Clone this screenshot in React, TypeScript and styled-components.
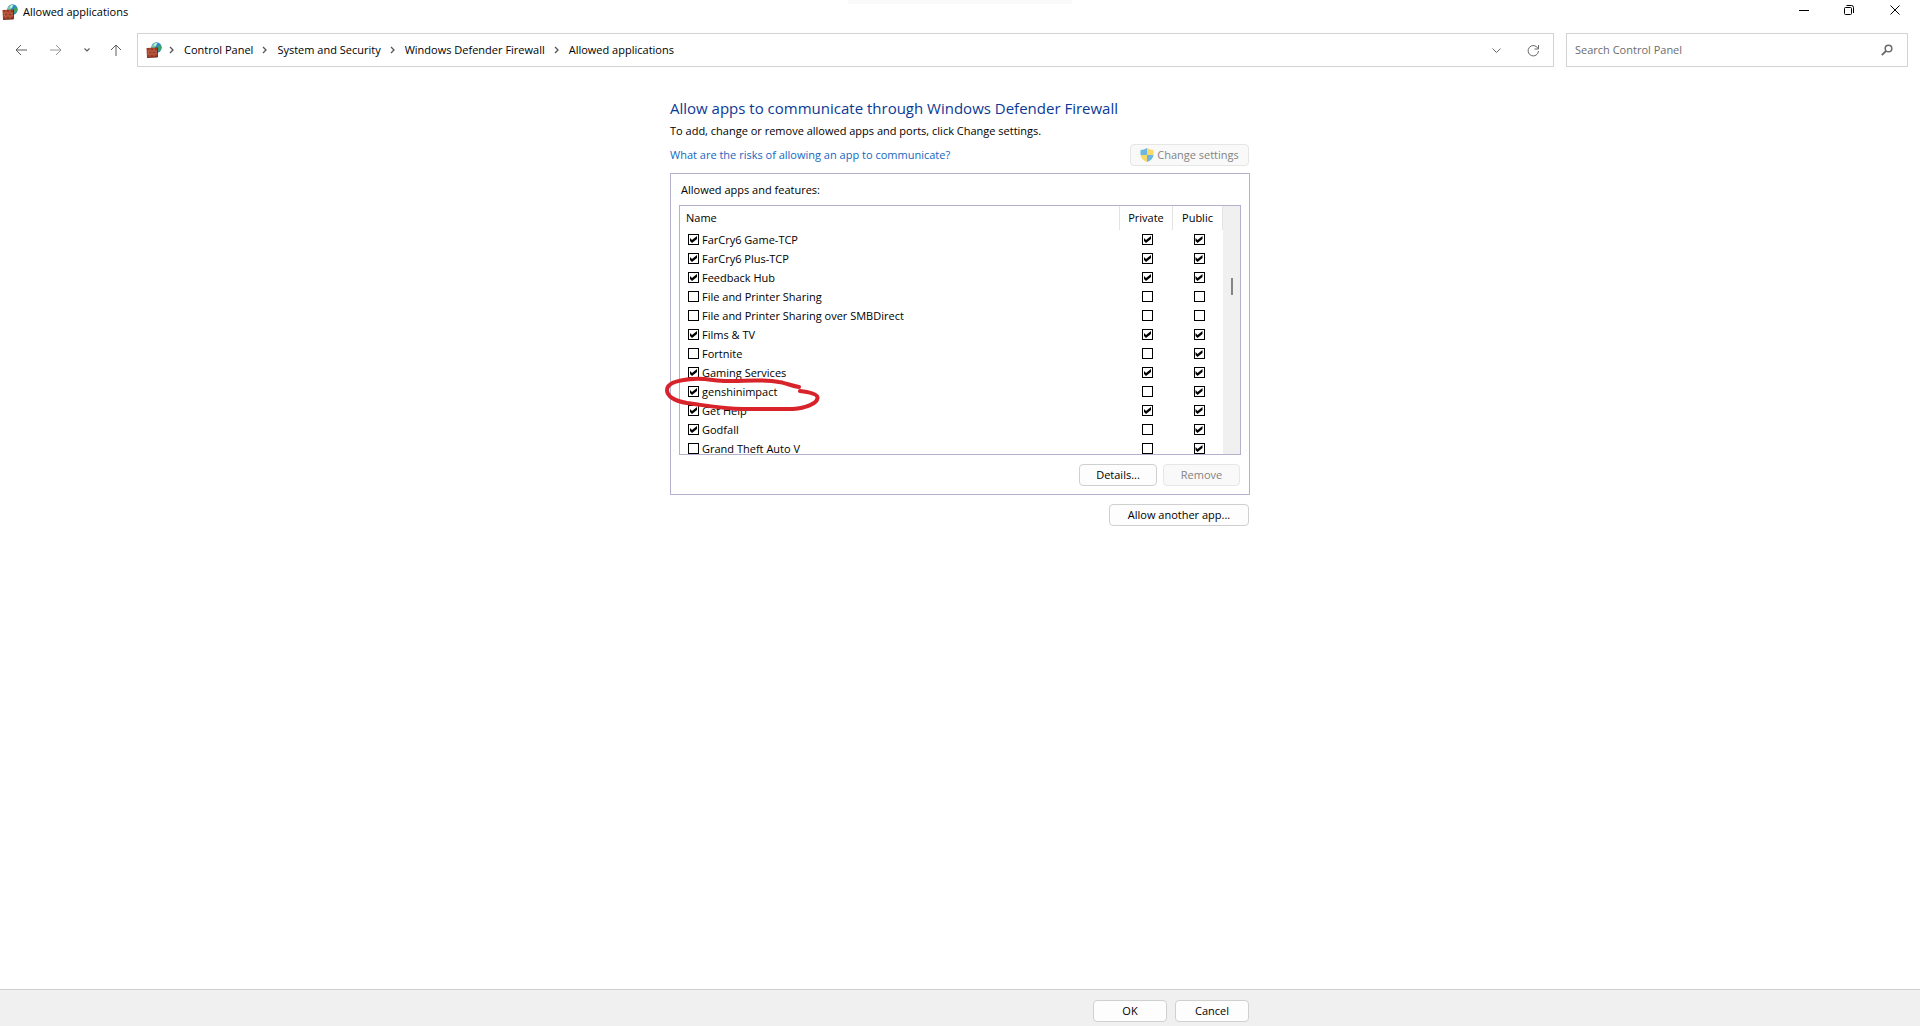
import React, { useId } from "react";
import styled, { createGlobalStyle, css } from "styled-components";

const GlobalStyle = createGlobalStyle`
  *, *::before, *::after { box-sizing: border-box; }
  body {
    margin: 0;
    background: #fff;
    color: #000;
    font-family: "Open Sans", "Noto Sans", sans-serif;
    font-size: 11px;
    line-height: 16px;
  }
  button, input { font: inherit; color: inherit; }
`;

const Window = styled.div`
  position: relative;
  display: flex;
  flex-direction: column;
  min-height: 100vh;
`;

const SnapHandle = styled.div`
  position: absolute;
  top: 0;
  left: 50%;
  width: 224px;
  height: 4px;
  margin-left: -112px;
  background: #fafafa;
`;

const TitleBar = styled.header`
  display: flex;
  align-items: center;
  justify-content: space-between;
  height: 23px;
  padding: 0 1px 0 2px;
`;

const Title = styled.h1`
  display: flex;
  align-items: center;
  gap: 5px;
  margin: 0;
  font-size: 11px;
  font-weight: 400;
`;

const CaptionButtons = styled.div`
  display: flex;
  align-self: flex-start;
`;

const IconButton = styled.button<{ $width: number }>`
  display: flex;
  align-items: center;
  justify-content: center;
  width: ${(p) => p.$width}px;
  height: 20px;
  padding: 0;
  border: 0;
  background: none;
`;

const NavBar = styled.nav`
  display: flex;
  align-items: center;
  margin-top: 10px;
  padding: 0 12px 0 4px;
`;

const NavButtons = styled.div`
  display: flex;
  width: 133px;
`;

const fieldBox = css`
  display: flex;
  align-items: center;
  height: 34px;
  border: 1px solid #d3d3d3;
  background: #fff;
`;

const AddressBar = styled.div`
  ${fieldBox}
  flex: 1;
  padding: 0 2px 0 8px;
`;

const Crumbs = styled.ol`
  display: flex;
  flex: 1;
  margin: 0 0 0 -2px;
  padding: 0;
  list-style: none;
`;

const Crumb = styled.li`
  display: flex;
  align-items: center;

  svg { margin: 0 10px 0 9px; }
`;

const CrumbLink = styled.a`
  color: inherit;
  text-decoration: none;
`;

const SearchBox = styled.div`
  ${fieldBox}
  width: 342px;
  margin-left: 12px;
  padding: 0 3px 0 8px;
`;

const SearchInput = styled.input`
  flex: 1;
  min-width: 0;
  padding: 0;
  border: 0;
  outline: 0;
  background: none;

  &::placeholder { color: #6d6d6d; opacity: 1; }
`;

const Content = styled.main`
  flex: 1;
  width: 580px;
  margin: 0 auto;
  padding-top: 29px;
`;

const Heading = styled.h2`
  margin: 0;
  color: #0b3a94;
  font-size: 15px;
  font-weight: 400;
  line-height: 24px;
`;

const Intro = styled.p`
  margin: 3px 0 5px;
`;

const SettingsRow = styled.div`
  display: flex;
  align-items: center;
  justify-content: space-between;
  padding-right: 1px;
`;

const HelpLink = styled.a`
  color: #1467c0;
  text-decoration: none;
`;

const PushButton = styled.button<{ $width: number }>`
  display: flex;
  align-items: center;
  justify-content: center;
  gap: 3px;
  width: ${(p) => p.$width}px;
  height: 22px;
  padding: 0;
  border: 1px solid #d0d0d0;
  border-radius: 4px;
  background: #fdfdfd;
  white-space: nowrap;

  &:disabled {
    border-color: #e6e6e6;
    background: #f9f9f9;
    color: #838383;
  }
`;

const Panel = styled.section`
  position: relative;
  margin-top: 7px;
  padding: 8px;
  border: 1px solid #b4b1cc;
`;

const PanelLabel = styled.h3`
  margin: 0 0 7px 2px;
  font-size: 11px;
  font-weight: 400;
`;

const ListBox = styled.div`
  display: flex;
  height: 250px;
  border: 1px solid #b4b1cc;
  overflow: hidden;
`;

const AppTable = styled.table`
  flex: 1;
  align-self: flex-start;
  border-collapse: separate;
  border-spacing: 0;
  table-layout: fixed;
`;

const HeadCell = styled.th<{ $width?: number; $center?: boolean }>`
  width: ${(p) => (p.$width ? `${p.$width}px` : "auto")};
  height: 24px;
  padding: 0 0 0 ${(p) => (p.$center ? 0 : 6)}px;
  border-right: 1px solid #e3e3e3;
  font-weight: 400;
  text-align: ${(p) => (p.$center ? "center" : "left")};
`;

const Cell = styled.td<{ $center?: boolean }>`
  height: 19px;
  padding: 0 0 0 ${(p) => (p.$center ? 2 : 8)}px;
`;

const CellInner = styled.div<{ $center?: boolean }>`
  display: flex;
  align-items: center;
  justify-content: ${(p) => (p.$center ? "center" : "flex-start")};
  gap: 3px;
  height: 19px;
`;

const Tick = styled.input.attrs({ type: "checkbox" })`
  appearance: none;
  display: block;
  width: 11px;
  height: 11px;
  margin: 0;
  border: 1px solid #000;
  background: #fff;

  &:checked::before {
    content: "";
    display: block;
    width: 9px;
    height: 9px;
    background: #000;
    clip-path: polygon(1px 3px, 3px 5px, 8px 1px, 8px 4px, 3px 8px, 1px 6px);
  }
`;

const ScrollTrack = styled.div`
  width: 17px;
  padding: 72px 7px 0 8px;
  background: #f0f0f0;
`;

const ScrollThumb = styled.div`
  height: 17px;
  background: #858585;
`;

const ButtonRow = styled.div<{ $gap: number; $top: number }>`
  display: flex;
  justify-content: flex-end;
  gap: ${(p) => p.$gap}px;
  padding: ${(p) => p.$top}px 1px 0 0;
`;

const Footer = styled.footer`
  height: 37px;
  border-top: 1px solid #cfcfcf;
  background: #f0f0f0;
`;

const FooterInner = styled.div`
  width: 580px;
  margin: 0 auto;
`;

const Marker = styled.svg`
  position: absolute;
  left: -11px;
  top: 201px;
  pointer-events: none;
`;

const FirewallIcon = () => (
  <svg width="16" height="16" viewBox="0 0 16 16" aria-hidden="true">
    <circle cx="10.500" cy="5.500" r="5.200" fill="#2b86cf" />
    <path d="M6 3.500 8.500.8l3 .2-1 2.200-1.500 2.300-2.500 1Z" fill="#7fd0a0" />
    <path d="m12 4 2.500-1 1 2.500-1 3-2 .8-1-2.500Z" fill="#3fa564" />
    <path d="M9 1.500 11 1l-1 2.500-2 .5Z" fill="#d5f1f8" />
    <path d="M.5 6 11.500 5.500v9.500L1 15.500Z" fill="#9c3a24" />
    <path
      d="M1 9h10.500M1 12h10.500M4 6.500V9M8 6v3M2.500 9v3M6 9v3M10 9v3M4 12v3M8 12v3"
      stroke="#d27a5c"
      strokeWidth=".6"
      fill="none"
    />
    <path d="M11.500 5.500V15L1 15.500" stroke="#5b1d12" strokeWidth=".8" fill="none" />
  </svg>
);

const ShieldIcon = () => (
  <svg width="14" height="14" viewBox="0 0 14 14" aria-hidden="true">
    <path d="M7 0v7H.5V2Q4 2 7 0Z" fill="#6fb7e0" />
    <path d="M7 0v7h6.500V2Q10 2 7 0Z" fill="#f9d968" />
    <path d="M7 14V7H.5q.5 5 6.500 7Z" fill="#f9d968" />
    <path d="M7 14V7h6.500q-.5 5-6.500 7Z" fill="#6fb7e0" />
  </svg>
);

type GlyphProps = { d: string; w: number; h: number; color: string; stroke?: number };

const Glyph = ({ d, w, h, color, stroke = 1 }: GlyphProps) => (
  <svg width={w} height={h} viewBox={`0 0 ${w} ${h}`} fill="none" stroke={color} strokeWidth={stroke} aria-hidden="true">
    <path d={d} />
  </svg>
);

const Separator = () => <Glyph d="M1 1l3 3-3 3" w={5} h={8} color="#555" stroke={1.3} />;

type AppEntry = { name: string; on: boolean; priv: boolean; pub: boolean };

const apps: AppEntry[] = [
  { name: "FarCry6 Game-TCP", on: true, priv: true, pub: true },
  { name: "FarCry6 Plus-TCP", on: true, priv: true, pub: true },
  { name: "Feedback Hub", on: true, priv: true, pub: true },
  { name: "File and Printer Sharing", on: false, priv: false, pub: false },
  { name: "File and Printer Sharing over SMBDirect", on: false, priv: false, pub: false },
  { name: "Films & TV", on: true, priv: true, pub: true },
  { name: "Fortnite", on: false, priv: false, pub: true },
  { name: "Gaming Services", on: true, priv: true, pub: true },
  { name: "genshinimpact", on: true, priv: false, pub: true },
  { name: "Get Help", on: true, priv: true, pub: true },
  { name: "Godfall", on: true, priv: false, pub: true },
  { name: "Grand Theft Auto V", on: false, priv: false, pub: true },
];

const AppRow = ({ app }: { app: AppEntry }) => {
  const id = useId();
  return (
    <tr>
      <Cell>
        <CellInner>
          <Tick id={id} defaultChecked={app.on} />
          <label htmlFor={id}>{app.name}</label>
        </CellInner>
      </Cell>
      <Cell $center>
        <CellInner $center>
          <Tick aria-label={`${app.name}, Private`} defaultChecked={app.priv} />
        </CellInner>
      </Cell>
      <Cell $center>
        <CellInner $center>
          <Tick aria-label={`${app.name}, Public`} defaultChecked={app.pub} />
        </CellInner>
      </Cell>
    </tr>
  );
};

const crumbs = ["Control Panel", "System and Security", "Windows Defender Firewall", "Allowed applications"];

export default function App() {
  return (
    <Window>
      <GlobalStyle />
      <SnapHandle />
      <TitleBar>
        <Title>
          <FirewallIcon />
          Allowed applications
        </Title>
        <CaptionButtons>
          <IconButton $width={46} aria-label="Minimize">
            <Glyph d="M0 5.500h10" w={10} h={10} color="#000" />
          </IconButton>
          <IconButton $width={44} aria-label="Restore">
            <Glyph
              d="M2 2.500h4.500a1 1 0 0 1 1 1V8.500a1 1 0 0 1-1 1h-5a1 1 0 0 1-1-1V3.500a1 1 0 0 1 1-1ZM2.500.5H7.500a2 2 0 0 1 2 2V8"
              w={10}
              h={10}
              color="#000"
            />
          </IconButton>
          <IconButton $width={48} aria-label="Close">
            <Glyph d="M.5.5l9 9M9.500.5l-9 9" w={10} h={10} color="#000" />
          </IconButton>
        </CaptionButtons>
      </TitleBar>

      <NavBar aria-label="Location">
        <NavButtons>
          <IconButton $width={34} aria-label="Back">
            <Glyph d="M12 6H1M6 1L1 6l5 5" w={12} h={12} color="#5c5c5c" />
          </IconButton>
          <IconButton $width={36} aria-label="Forward">
            <Glyph d="M0 6h11M6 1l5 5-5 5" w={12} h={12} color="#9a9a9a" />
          </IconButton>
          <IconButton $width={25} aria-label="Recent locations">
            <Glyph d="M.5.5l2.500 2.500 2.500-2.500" w={6} h={4} color="#5c5c5c" stroke={1.2} />
          </IconButton>
          <IconButton $width={34} aria-label="Up">
            <Glyph d="M6 12V1M1 6l5-5 5 5" w={12} h={12} color="#5c5c5c" />
          </IconButton>
        </NavButtons>
        <AddressBar>
          <FirewallIcon />
          <Crumbs>
            {crumbs.map((crumb) => (
              <Crumb key={crumb}>
                <Separator />
                <CrumbLink href="#">{crumb}</CrumbLink>
              </Crumb>
            ))}
          </Crumbs>
          <IconButton $width={38} aria-label="Previous locations">
            <Glyph d="M.5.5l4 4 4-4" w={9} h={5} color="#6a6a6a" />
          </IconButton>
          <IconButton $width={36} aria-label="Refresh">
            <Glyph d="M11 4.500A5.200 5.200 0 1 0 11.500 7M11.500 1v4H7.500" w={12} h={13} color="#6a6a6a" />
          </IconButton>
        </AddressBar>
        <SearchBox>
          <SearchInput aria-label="Search Control Panel" placeholder="Search Control Panel" />
          <IconButton $width={34} aria-label="Search">
            <svg width="12" height="12" viewBox="0 0 12 12" fill="none" stroke="#6a6a6a" aria-hidden="true">
              <circle cx="7.500" cy="4.500" r="3.300" strokeWidth="1.500" />
              <path d="M5 7L.8 11.200" strokeWidth="1.800" />
            </svg>
          </IconButton>
        </SearchBox>
      </NavBar>

      <Content>
        <Heading>Allow apps to communicate through Windows Defender Firewall</Heading>
        <Intro>To add, change or remove allowed apps and ports, click Change settings.</Intro>
        <SettingsRow>
          <HelpLink href="#">What are the risks of allowing an app to communicate?</HelpLink>
          <PushButton $width={119} disabled>
            <ShieldIcon />
            Change settings
          </PushButton>
        </SettingsRow>
        <Panel>
          <PanelLabel>Allowed apps and features:</PanelLabel>
          <ListBox>
            <AppTable>
              <thead>
                <tr>
                  <HeadCell>Name</HeadCell>
                  <HeadCell $width={53} $center>Private</HeadCell>
                  <HeadCell $width={50} $center>Public</HeadCell>
                </tr>
              </thead>
              <tbody>
                {apps.map((app) => (
                  <AppRow key={app.name} app={app} />
                ))}
              </tbody>
            </AppTable>
            <ScrollTrack>
              <ScrollThumb />
            </ScrollTrack>
          </ListBox>
          <ButtonRow $gap={6} $top={9}>
            <PushButton $width={78}>Details...</PushButton>
            <PushButton $width={77} disabled>Remove</PushButton>
          </ButtonRow>
          <Marker width="164" height="40" viewBox="0 0 164 40" fill="none" aria-hidden="true">
            <path
              d="M139 12C132 11 126 8 119 7 103 4 86 6 67 6 55 6 46 3 33 4 17 5 7 8 7 15 7 21 14 26 27 28 43 30 63 34 83 34H133C145 33 157 29 157.500 23 158 19 148 17 140 16"
              stroke="#d8232a"
              strokeWidth="4"
              strokeLinecap="round"
              strokeLinejoin="round"
            />
          </Marker>
        </Panel>
        <ButtonRow $gap={6} $top={9}>
          <PushButton $width={140}>Allow another app...</PushButton>
        </ButtonRow>
      </Content>

      <Footer>
        <FooterInner>
          <ButtonRow $gap={8} $top={10}>
            <PushButton $width={74}>OK</PushButton>
            <PushButton $width={74}>Cancel</PushButton>
          </ButtonRow>
        </FooterInner>
      </Footer>
    </Window>
  );
}
